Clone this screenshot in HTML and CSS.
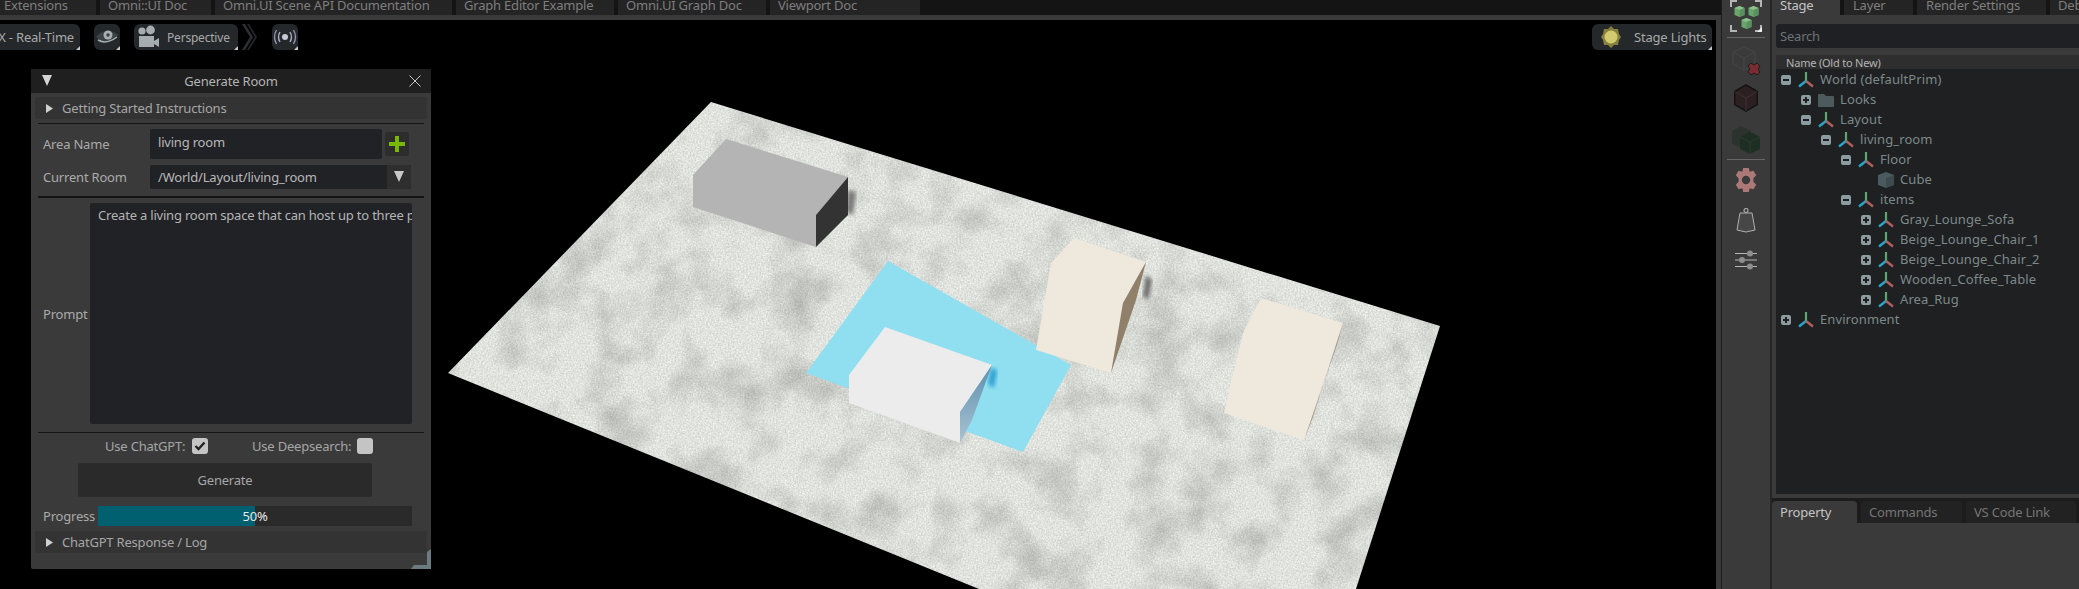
FILE: index.html
```html
<!DOCTYPE html>
<html lang="en">
<head>
  <meta charset="UTF-8">
  <title>Generate Room</title>
  <link rel="stylesheet" href="styles.css">
</head>
<body>
  <svg class="defs" width="0" height="0">
    <defs>
      <symbol id="axis" viewBox="0 0 16 16">
        <path d="M8 0v9" stroke="#5fa56f" stroke-width="2.200" fill="none"/>
        <path d="M8 9L1 14.500" stroke="#2ba6c8" stroke-width="2.400" fill="none"/>
        <path d="M8 9L15 14.500" stroke="#b0605f" stroke-width="2.400" fill="none"/>
      </symbol>
      <symbol id="tri-right" viewBox="1 0 8 10" preserveAspectRatio="none"><path d="M1 0l8 5l-8 5z" fill="#d0d0d0"/></symbol>
      <symbol id="mini-cube" viewBox="0 0 11 11">
        <path d="M5.500 0l5 2v7l-5 2l-5-2V2z" fill="#6aa56c"/>
        <path d="M5.500 0l5 2l-5 2l-5-2z" fill="#8dc08d"/>
        <path d="M5.500 4l5-2v7l-5 2z" fill="#5b9160"/>
      </symbol>
      <filter id="concrete" x="0" y="0" width="100%" height="100%" color-interpolation-filters="sRGB">
        <feTurbulence type="fractalNoise" baseFrequency="0.022" numOctaves="5" seed="11" result="cloud"/>
        <feColorMatrix in="cloud" result="cloudGray" values="0.38 0 0 0 0.78  0.38 0 0 0 0.78  0.38 0 0 0 0.78  0 0 0 0 1"/>
        <feTurbulence type="fractalNoise" baseFrequency="0.6" numOctaves="3" seed="3" result="grain"/>
        <feColorMatrix in="grain" result="grainGray" values="0.22 0 0 0 0.77  0.22 0 0 0 0.78  0.22 0 0 0 0.76  0 0 0 0 1"/>
        <feBlend in="cloudGray" in2="grainGray" mode="multiply" result="mix"/>
        <feComposite in="mix" in2="SourceAlpha" operator="in"/>
      </filter>
      <filter id="soft"><feGaussianBlur stdDeviation="2"/></filter>
      <linearGradient id="whiteSide" x1="0" y1="0" x2="0" y2="1"><stop offset="0" stop-color="#5f8fae"/><stop offset="1" stop-color="#a9c3d3"/></linearGradient>
    </defs>
  </svg>

  <div class="app">
    <div class="main">
      <div class="tabs">
        <div class="tab tab-first">Extensions</div>
        <div class="tab tab-ui">Omni::UI Doc</div>
        <div class="tab tab-scene">Omni.UI Scene API Documentation</div>
        <div class="tab tab-graph">Graph Editor Example</div>
        <div class="tab tab-gdoc">Omni.UI Graph Doc</div>
        <div class="tab">Viewport Doc</div>
      </div>
      <div class="viewport">
        <svg class="scene" width="1716" height="569" viewBox="0 20 1716 569">
          <polygon points="711,102 1440,326 1356,589 979,589 448,373" fill="#fff" filter="url(#concrete)"/>
          <!-- gray sofa -->
          <polygon points="848,190 856,192 853,215 846,212" fill="#777" filter="url(#soft)"/>
          <polygon points="726,139 848,177 816,215 816,247 693,207 693,175" fill="#b4b4b4"/>
          <polygon points="848,177 848,215 816,247 816,215" fill="#333"/>
          <!-- rug -->
          <polygon points="888,261 1071,365 1023,452 806,373" fill="#90dff0"/>
          <polygon points="991,368 997,370 994,388 988,384" fill="#2a9fd0" filter="url(#soft)"/>
          <!-- white table -->
          <polygon points="885,327 992,365 960,412 960,443 849,403 849,375" fill="#edecec"/>
          <polygon points="992,365 960,412 960,443 972,420" fill="url(#whiteSide)"/>
          <!-- beige chairs -->
          <polygon points="1146,275 1152,280 1148,300 1143,296" fill="#666" filter="url(#soft)"/>
          <polygon points="1074,238 1146,262 1123,303 1111,373 1036,350 1051,263" fill="#efe8dc"/>
          <polygon points="1146,262 1123,303 1111,373 1136,300" fill="#918069"/>
          <polygon points="1261,298 1343,323 1304,440 1224,413 1243,333" fill="#efe8dc"/>
          <polygon points="1343,323 1337,345 1304,440 1312,420" fill="#a8987f"/>
        </svg>

        <div class="vp-bar vp-left">
          <div class="pill pill-render">X - Real-Time</div>
          <div class="pill pill-icon pill-eye">
            <svg width="24" height="16" viewBox="0 0 24 16">
              <path d="M1 8C6 1 17 0 23 6C19 12 8 15 1 8z" fill="#3a4246"/>
              <circle cx="13" cy="6" r="4.500" fill="#a8b0b4"/>
              <circle cx="13" cy="6" r="1.800" fill="#3a4246"/>
              <path d="M3 11Q11 16 22 8" stroke="#a8b0b4" stroke-width="1.500" fill="none"/>
            </svg>
          </div>
          <div class="pill pill-persp">
            <svg width="24" height="26" viewBox="0 0 24 26">
              <circle cx="6" cy="7" r="3.600" fill="#a5adb1"/>
              <circle cx="14.500" cy="6" r="4.400" fill="#a5adb1"/>
              <path d="M3 12h15v11H3z" fill="#a5adb1"/>
              <path d="M18 17l5-3v9l-5-3z" fill="#a5adb1"/>
            </svg>
            <span>Perspective</span>
          </div>
          <svg class="chevrons" width="16" height="26" viewBox="0 0 16 26">
            <path d="M0 0h3l8 13l-8 13H0l8-13z" fill="#2c3033"/>
            <path d="M5 0h2l8 13l-8 13H5l8-13z" fill="#24282b"/>
          </svg>
          <div class="pill pill-icon pill-signal">
            <svg width="24" height="16" viewBox="0 0 24 16">
              <circle cx="12" cy="8" r="3" fill="#c4c8d8"/>
              <path d="M7 3Q4 8 7 13M17 3Q20 8 17 13" stroke="#a8acc4" stroke-width="1.400" fill="none"/>
              <path d="M3.500 1Q-.5 8 3.500 15M20.500 1Q24.500 8 20.500 15" stroke="#8f93b0" stroke-width="1.400" fill="none"/>
            </svg>
          </div>
        </div>

        <div class="pill pill-lights">
          <svg width="20" height="22" viewBox="0 0 20 22">
            <path d="M10 0l3 3h4l1 5l2 3l-2 3l-1 5h-4l-3 3l-3-3H3l-1-5l-2-3l2-3l1-5h4z" fill="#86803f"/>
            <circle cx="10" cy="11" r="6.500" fill="#d3cb70"/>
          </svg>
          <span>Stage Lights</span>
        </div>

        <div class="window">
          <div class="win-title">
            <span class="win-arrow"></span>
            <span class="win-name">Generate Room</span>
            <svg class="win-close" width="12" height="12" viewBox="0 0 12 12"><path d="M.5.5l11 11M11.500.5l-11 11" stroke="#c8c8c8" stroke-width="1" fill="none"/></svg>
          </div>
          <div class="win-body">
            <div class="collapse"><svg width="7" height="9"><use href="#tri-right"/></svg><span>Getting Started Instructions</span></div>
            <div class="sep sep-a"></div>
            <div class="row row-area">
              <label>Area Name</label>
              <div class="input input-area">living room</div>
              <div class="add-btn">
                <svg width="16" height="16" viewBox="0 0 16 16"><path d="M6 0h4v6h6v4h-6v6H6v-6H0V6h6z" fill="#76b900"/></svg>
              </div>
            </div>
            <div class="row row-room">
              <label>Current Room</label>
              <div class="combo">
                <span class="combo-text">/World/Layout/living_room</span>
                <span class="combo-btn"><i></i></span>
              </div>
            </div>
            <div class="sep sep-b"></div>
            <div class="row row-prompt">
              <label>Prompt</label>
              <div class="textarea"><span>Create a living room space that can host up to three p</span></div>
            </div>
            <div class="sep sep-c"></div>
            <div class="checks">
              <span class="check-label">Use ChatGPT:</span>
              <span class="check">
                <svg width="12" height="10" viewBox="0 0 12 10"><path d="M1.500 5l3 3l6-6.500" stroke="#222" stroke-width="2.400" fill="none"/></svg>
              </span>
              <span class="check-label check-label2">Use Deepsearch:</span>
              <span class="check"></span>
            </div>
            <div class="gen-btn">Generate</div>
            <div class="row row-progress">
              <label>Progress</label>
              <div class="progress">
                <div class="progress-fill" style="width: 50%"></div>
                <span class="progress-text">50%</span>
              </div>
            </div>
            <div class="collapse collapse-log"><svg width="7" height="9"><use href="#tri-right"/></svg><span>ChatGPT Response / Log</span></div>
          </div>
          <svg class="win-grip" width="20" height="20" viewBox="0 0 20 20"><path d="M20 0v20H0l3-4h13V3z" fill="#6a7c80"/></svg>
        </div>
      </div>
    </div>

    <div class="toolbar">
      <div class="tool-select">
        <svg class="tool" width="32" height="32" viewBox="0 0 32 32">
          <path d="M0 0h7v2H2v5H0zM25 0h7v7h-2V2h-5zM0 25h2v5h5v2H0zM30 25h2v7h-7v-2h5z" fill="#b5b5b5"/>
          <path d="M32 27v5h-5z" fill="#eee"/>
          <use href="#mini-cube" x="4" y="6" width="11" height="11"/>
          <use href="#mini-cube" x="18" y="6" width="11" height="11"/>
          <use href="#mini-cube" x="11" y="18" width="11" height="11"/>
        </svg>
      </div>
      <div class="tool-sep"></div>
      <svg class="tool tool-ghost" width="32" height="30" viewBox="0 0 32 30">
        <path d="M14 1l11 5v12l-11 6l-11-6V6zM3 6l11 6l11-6M14 12v12" fill="none" stroke="#464646"/>
        <path d="M21 17l3 2l3-2l3 3l-2 3l2 3l-3 3l-3-2l-3 2l-3-3l2-3l-2-3z" fill="#7a2c30" stroke="#1c1c1c" stroke-width="1"/>
      </svg>
      <svg class="tool tool-red" width="28" height="28" viewBox="0 0 28 30">
        <path d="M14 1l12 7v14l-12 7l-12-7V8z" fill="#2c2122" stroke="#111" stroke-width="1.500"/>
        <path d="M2 8l12 7l12-7M14 15v14" stroke="#3f3233" fill="none"/>
      </svg>
      <svg class="tool tool-green" width="32" height="30" viewBox="0 0 32 30">
        <path d="M2 7l9-5l10 5v12l-10 5l-9-5z" fill="#2c322d"/>
        <path d="M10 13l10-5l10 5v12l-10 5l-10-5z" fill="#1f2e22"/>
        <path d="M10 13l10 5l10-5M20 18v12" stroke="#2a3a2c" fill="none"/>
      </svg>
      <div class="tool-sep tool-sep-b"></div>
      <svg class="tool tool-gear" width="26" height="26" viewBox="0 0 26 28">
        <path d="M10 1h6l1 4l4-1l3 5l-3 3v4l3 3l-3 5l-4-1l-1 4h-6l-1-4l-4 1l-3-5l3-3v-4l-3-3l3-5l4 1z" fill="#ad7878"/>
        <circle cx="13" cy="14" r="4.500" fill="#3a3a3a"/>
      </svg>
      <svg class="tool tool-weight" width="20" height="25" viewBox="0 0 20 25">
        <circle cx="10" cy="2.500" r="2" fill="none" stroke="#a8a8a8" stroke-width="1.200"/>
        <path d="M4 5h12l3 17l-9 2l-9-2z" fill="#474747" stroke="#b0b0b0"/>
      </svg>
      <svg class="tool tool-sliders" width="22" height="20" viewBox="0 0 22 20">
        <path d="M0 3.500h22M0 10h22M0 16.500h22" stroke="#b5b5b5" stroke-width="1.200"/>
        <circle cx="15" cy="3.500" r="3" fill="#8e8e8e"/>
        <circle cx="7" cy="10" r="3" fill="#8e8e8e"/>
        <circle cx="15" cy="16.500" r="3" fill="#8e8e8e"/>
      </svg>
    </div>

    <div class="side">
      <div class="tabs side-tabs">
        <div class="tab tab-stage">Stage</div>
        <div class="tab tab-layer">Layer</div>
        <div class="tab tab-render">Render Settings</div>
        <div class="tab tab-debug">Debug</div>
      </div>
      <div class="stage">
        <div class="search">Search</div>
        <div class="tree-head">Name (Old to New)</div>
        <div class="tree">
          <div class="node d0"><i class="exp minus"></i><svg class="ico"><use href="#axis"/></svg><span>World (defaultPrim)</span></div>
          <div class="node d1"><i class="exp plus"></i>
            <svg class="ico" viewBox="0 0 16 16"><path d="M0 3q0-1 1-1h5l2 2h7q1 0 1 1v9q0 1-1 1H1q-1 0-1-1z" fill="#4c5a5e"/></svg>
            <span>Looks</span></div>
          <div class="node d1"><i class="exp minus"></i><svg class="ico"><use href="#axis"/></svg><span>Layout</span></div>
          <div class="node d2"><i class="exp minus"></i><svg class="ico"><use href="#axis"/></svg><span>living_room</span></div>
          <div class="node d3"><i class="exp minus"></i><svg class="ico"><use href="#axis"/></svg><span>Floor</span></div>
          <div class="node d4"><i class="exp none"></i>
            <svg class="ico" viewBox="0 0 16 16"><path d="M8 0l8 3v10l-8 3l-8-3V3z" fill="#4a5a5e"/><path d="M8 6l8-3v10l-8 3z" fill="#3d4a4e"/></svg>
            <span>Cube</span></div>
          <div class="node d3"><i class="exp minus"></i><svg class="ico"><use href="#axis"/></svg><span>items</span></div>
          <div class="node d4"><i class="exp plus"></i><svg class="ico"><use href="#axis"/></svg><span>Gray_Lounge_Sofa</span></div>
          <div class="node d4"><i class="exp plus"></i><svg class="ico"><use href="#axis"/></svg><span>Beige_Lounge_Chair_1</span></div>
          <div class="node d4"><i class="exp plus"></i><svg class="ico"><use href="#axis"/></svg><span>Beige_Lounge_Chair_2</span></div>
          <div class="node d4"><i class="exp plus"></i><svg class="ico"><use href="#axis"/></svg><span>Wooden_Coffee_Table</span></div>
          <div class="node d4"><i class="exp plus"></i><svg class="ico"><use href="#axis"/></svg><span>Area_Rug</span></div>
          <div class="node d0"><i class="exp plus"></i><svg class="ico"><use href="#axis"/></svg><span>Environment</span></div>
        </div>
      </div>
      <div class="prop-tabs">
        <div class="ptab ptab-on ptab-prop">Property</div>
        <div class="ptab ptab-cmd">Commands</div>
        <div class="ptab ptab-vs">VS Code Link</div>
      </div>
      <div class="prop-body"></div>
    </div>
  </div>
</body>
</html>
```

FILE: styles.css
```css
* {
  box-sizing: border-box;
}
html, body {
  margin: 0;
  height: 589px;
  background: #000;
  overflow: hidden;
  font-family: "Noto Sans", sans-serif;
  font-stretch: 87.5%;
  font-size: 13px;
  letter-spacing: -0.2px;
  color: #b0b0b0;
}
.defs {
  display: block;
  height: 0;
}
.app {
  display: flex;
  width: 2079px;
  height: 589px;
}

/* left area */
.main {
  width: 1721px;
  display: flex;
  flex-direction: column;
  background: #393939;
}
.tabs {
  display: flex;
  gap: 4px;
  height: 15px;
  background: #141414;
  overflow: hidden;
  flex-shrink: 0;
}
.tab {
  height: 15px;
  line-height: 11px;
  background: #242424;
  color: #7e7e7e;
  white-space: nowrap;
  padding-left: 8px;
  width: 150px;
  flex-shrink: 0;
}
.tab-first {
  padding-left: 4px;
  width: 96px;
}
.tab-ui { width: 111px; }
.tab-scene { width: 237px; }
.tab-graph { width: 158px; }
.tab-gdoc { width: 148px; }
.viewport {
  position: relative;
  margin-top: 5px;
  width: 1716px;
  flex: 1;
  background: #000;
  overflow: hidden;
}
.scene {
  position: absolute;
  left: 0;
  top: 0;
}
.vp-bar {
  position: absolute;
  left: 0;
  top: 4px;
  display: flex;
  align-items: center;
}
.pill {
  position: relative;
  height: 26px;
  display: flex;
  align-items: center;
  background: #24282b;
  border-radius: 6px;
  color: #a8a8a8;
  font-size: 13px;
  white-space: nowrap;
}
.pill::after {
  content: "";
  position: absolute;
  right: 0;
  bottom: 0;
  border-style: solid;
  border-width: 0 0 4px 4px;
  border-color: transparent transparent #c8c8c8 transparent;
}
.pill-render {
  width: 80px;
  border-radius: 0 6px 6px 0;
  justify-content: flex-end;
  padding-right: 6px;
}
.pill-icon {
  width: 26px;
  justify-content: center;
}
.pill-eye {
  margin-left: 14px;
}
.pill-persp {
  width: 104px;
  margin-left: 14px;
  padding-left: 2px;
  gap: 7px;
  font-size: 12px;
}
.chevrons {
  margin-left: 4px;
}
.pill-signal {
  margin-left: 14px;
}
.pill-lights {
  position: absolute;
  left: 1592px;
  top: 4px;
  width: 120px;
  padding-left: 9px;
  gap: 13px;
  font-size: 13px;
}

/* floating window */
.window {
  position: absolute;
  left: 31px;
  top: 49px;
  width: 400px;
  height: 500px;
  background: #3a3a3a;
  border-radius: 2px;
}
.win-title {
  position: relative;
  height: 24px;
  background: #1f1f1f;
  text-align: center;
  line-height: 24px;
  color: #b4b4b4;
}
.win-arrow {
  position: absolute;
  left: 11px;
  top: 6px;
  border-style: solid;
  border-width: 11px 5.500px 0 5.500px;
  border-color: #d4d4d4 transparent transparent transparent;
}
.win-close {
  position: absolute;
  right: 10px;
  top: 6px;
}
.win-body {
  padding: 4px 4px 0;
}
.collapse {
  height: 22px;
  background: #333;
  border-radius: 2px;
  display: flex;
  align-items: center;
  padding-left: 11px;
  gap: 9px;
  color: #a6a6a6;
}
.sep {
  height: 1px;
  background: #141414;
  margin: 0 3px;
}
.sep-a {
  margin-top: 4px;
}
.row {
  display: flex;
}
.row label {
  width: 115px;
  padding-left: 8px;
  flex-shrink: 0;
  color: #aaa;
}
.row-area {
  margin-top: 5px;
  height: 30px;
  align-items: center;
}
.input {
  width: 232px;
  height: 30px;
  background: #212226;
  border-radius: 2px;
  padding: 3px 8px;
  line-height: 20px;
  color: #b8b8b8;
}
.add-btn {
  width: 24px;
  height: 24px;
  margin-left: 3px;
  background: #2d2d2d;
  border-radius: 2px;
  display: flex;
  align-items: center;
  justify-content: center;
}
.row-room {
  margin-top: 6px;
  height: 24px;
  align-items: center;
}
.combo {
  width: 261px;
  height: 24px;
  display: flex;
  background: #212226;
  border-radius: 2px;
  line-height: 24px;
  color: #b8b8b8;
}
.combo-text {
  flex: 1;
  padding-left: 8px;
}
.combo-btn {
  width: 24px;
  background: #2e2e2e;
  border-radius: 0 2px 2px 0;
  display: flex;
  justify-content: center;
  padding-top: 6px;
}
.combo-btn i {
  border-style: solid;
  border-width: 11px 5.500px 0 5.500px;
  border-color: #c8c8c8 transparent transparent transparent;
  height: 0;
}
.sep-b {
  margin-top: 7px;
  height: 2px;
}
.row-prompt {
  margin-top: 5px;
  height: 221px;
  align-items: center;
}
.row-prompt label {
  width: 55px;
}
.textarea {
  align-self: stretch;
  width: 322px;
  background: #212226;
  border-radius: 2px;
  padding: 3px 4px 0 8px;
  overflow: hidden;
  white-space: nowrap;
  line-height: 18px;
  color: #b4b4b4;
}
.sep-c {
  margin-top: 8px;
}
.checks {
  margin-top: 5px;
  height: 16px;
  display: flex;
  align-items: center;
  padding-left: 70px;
  color: #a6a6a6;
}
.check-label {
  width: 87px;
}
.check {
  width: 16px;
  height: 16px;
  background: #c4c4c4;
  border-radius: 3px;
  display: flex;
  align-items: center;
  justify-content: center;
}
.check-label2 {
  width: 105px;
  margin-left: 44px;
}
.gen-btn {
  width: 294px;
  height: 34px;
  margin: 9px 0 0 43px;
  background: #2a2a2a;
  border-radius: 2px;
  text-align: center;
  line-height: 34px;
  color: #a6a6a6;
}
.row-progress {
  margin-top: 9px;
  height: 20px;
  align-items: center;
}
.row-progress label {
  width: 63px;
}
.progress {
  position: relative;
  width: 314px;
  height: 20px;
  background: #2a2a2a;
}
.progress-fill {
  height: 20px;
  background: #00606f;
}
.progress-text {
  position: absolute;
  left: 0;
  right: 0;
  top: 0;
  text-align: center;
  line-height: 20px;
  color: #e8e8e8;
}
.collapse-log {
  margin-top: 5px;
}
.win-grip {
  position: absolute;
  right: 0;
  bottom: 0;
}

/* tool column */
.toolbar {
  width: 51px;
  margin-left: 0;
  border-left: 1px solid #1c1c1c;
  border-right: 2px solid #262626;
  background: #3a3a3a;
  display: flex;
  flex-direction: column;
  align-items: center;
  flex-shrink: 0;
}
.tool {
  display: block;
  flex-shrink: 0;
}
.tool-sep {
  width: 38px;
  height: 1px;
  background: #666;
  margin-top: 5px;
}
.tool-ghost {
  margin-top: 8px;
}
.tool-red {
  margin-top: 8px;
}
.tool-green {
  margin-top: 12px;
}
.tool-sep-b {
  margin-top: 5px;
}
.tool-gear {
  margin-top: 7px;
}
.tool-weight {
  margin-top: 15px;
}
.tool-sliders {
  margin-top: 17px;
}

/* stage panel */
.side {
  flex: 1;
  display: flex;
  flex-direction: column;
  min-width: 0;
}
.side-tabs {
  gap: 4px;
}
.tab-stage {
  width: 68px;
  padding: 0 0 0 8px;
  background: #3a3a3a;
  color: #c4c4c4;
}
.tab-layer {
  width: 69px;
  padding: 0 0 0 9px;
}
.tab-render {
  width: 129px;
  padding: 0 0 0 9px;
}
.tab-debug {
  padding: 0 0 0 8px;
}
.stage {
  height: 483px;
  background: #3a3a3a;
  padding: 9px 0 4px 4px;
  display: flex;
  flex-direction: column;
  flex-shrink: 0;
}
.search {
  height: 24px;
  background: #1f2023;
  border-radius: 3px 0 0 3px;
  line-height: 24px;
  padding-left: 4px;
  color: #6c7478;
}
.tree-head {
  height: 14px;
  margin-top: 7px;
  background: #2e2e2e;
  padding-left: 10px;
  font-size: 11px;
  line-height: 15px;
  color: #b4b4b4;
}
.tree {
  flex: 1;
  background: #1f2022;
  padding-top: 1px;
}
.node {
  height: 20px;
  display: flex;
  align-items: center;
  color: #7d8989;
  white-space: nowrap;
  letter-spacing: 0.1px;
}
.node span {
  margin-bottom: 2px;
}
.d0 { padding-left: 5px; }
.d1 { padding-left: 25px; }
.d2 { padding-left: 45px; }
.d3 { padding-left: 65px; }
.d4 { padding-left: 85px; }
.exp {
  position: relative;
  width: 10px;
  height: 10px;
  background: #8c9ca0;
  border-radius: 2px;
  flex-shrink: 0;
}
.exp.none {
  background: none;
}
.minus::before, .plus::before, .plus::after {
  content: "";
  position: absolute;
  background: #1f2022;
}
.minus::before, .plus::before {
  left: 2px;
  right: 2px;
  top: 4px;
  height: 2px;
}
.plus::after {
  top: 2px;
  bottom: 2px;
  left: 4px;
  width: 2px;
}
.ico {
  width: 16px;
  height: 16px;
  margin: 0 6px 0 7px;
  flex-shrink: 0;
}
.prop-tabs {
  height: 25px;
  background: #1c1c1c;
  padding-top: 3px;
  display: flex;
  gap: 4px;
  flex-shrink: 0;
}
.ptab {
  height: 22px;
  line-height: 23px;
  background: #222;
  border-radius: 4px 4px 0 0;
  padding-left: 8px;
  color: #757575;
}
.ptab-on {
  background: #3a3a3a;
  color: #c4c4c4;
}
.ptab-prop {
  width: 85px;
}
.ptab-cmd {
  width: 101px;
}
.ptab-vs {
  width: 110px;
}
.prop-body {
  flex: 1;
  background: #3a3a3a;
}
```
